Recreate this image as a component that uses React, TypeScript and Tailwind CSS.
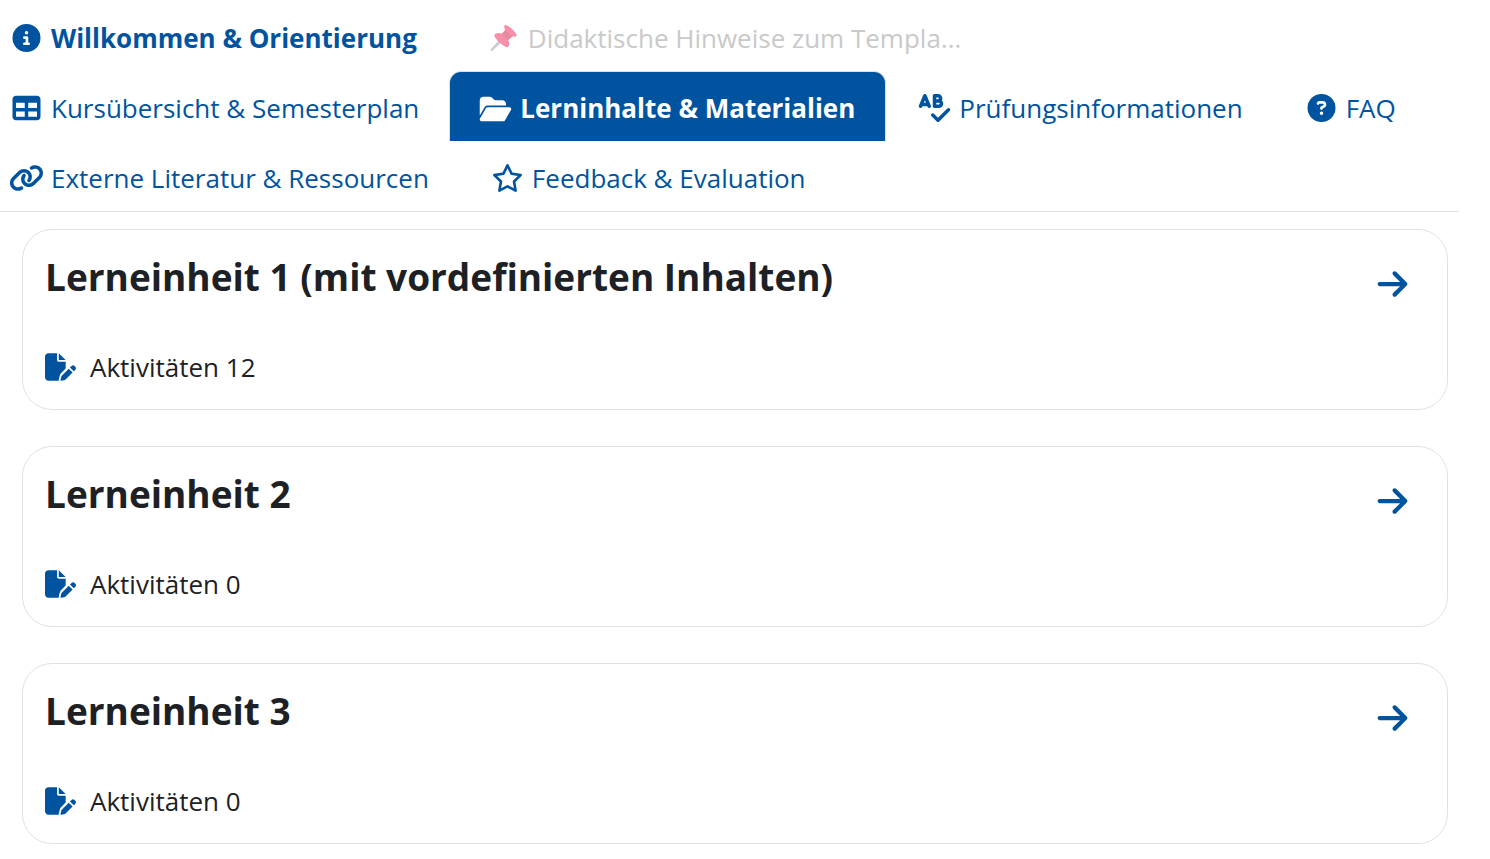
import {
  FaCircleInfo,
  FaTable,
  FaFolderOpen,
  FaCircleQuestion,
  FaLink,
  FaRegStar,
  FaSpellCheck,
  FaArrowRight,
  FaFilePen,
} from "react-icons/fa6";
import type { IconType } from "react-icons";
import clsx from "clsx";

const PushPin = ({ className }: { className?: string }) => (
  <svg viewBox="0 0 32 32" className={className} aria-hidden="true">
    <path d="M1 29.500 L11 18.500 L13.500 21 L2.500 31 Z" fill="#c9c9d0" />
    <path
      d="M17.500 1.500 C20 -0.500 32 10.500 31 13.500 C29.500 15.500 27.500 14.500 26.500 14 L21.500 18.500 C23.500 22 22.500 26 20 26.500 C17 27 5.500 16.500 5.500 13.500 C5.500 10.500 10 9.500 14 11 L18 6.500 C16.500 4.500 16.500 2.500 17.500 1.500 Z"
      fill="#f78fa8"
    />
    <path d="M18.500 7 L25.500 14 L21 18 L14.500 11.500 Z" fill="#e38ba0" />
  </svg>
);

interface Tab {
  label: string;
  icon: IconType | typeof PushPin;
  active?: boolean;
  bold?: boolean;
  dimmed?: boolean;
}

const rows: Tab[][] = [
  [
    { label: "Willkommen & Orientierung", icon: FaCircleInfo, bold: true },
    { label: "Didaktische Hinweise zum Templa...", icon: PushPin, dimmed: true },
  ],
  [
    { label: "Kursübersicht & Semesterplan", icon: FaTable },
    { label: "Lerninhalte & Materialien", icon: FaFolderOpen, active: true },
    { label: "Prüfungsinformationen", icon: FaSpellCheck },
    { label: "FAQ", icon: FaCircleQuestion },
  ],
  [
    { label: "Externe Literatur & Ressourcen", icon: FaLink },
    { label: "Feedback & Evaluation", icon: FaRegStar },
  ],
];

const units = [
  { title: "Lerneinheit 1 (mit vordefinierten Inhalten)", count: 12 },
  { title: "Lerneinheit 2", count: 0 },
  { title: "Lerneinheit 3", count: 0 },
];

const TabLink = ({ label, icon: Icon, active, bold, dimmed }: Tab) => (
  <a
    href="#"
    aria-current={active ? "page" : undefined}
    className={clsx(
      "flex h-full items-center gap-[7px] pt-1 text-[26px] whitespace-nowrap first:pl-[9px]",
      active
        ? "rounded-t-xl border border-b-0 border-[#dee2e6] bg-[#00549f] pl-7 font-bold text-white"
        : "pl-[31px]",
      bold ? "pr-[38px] font-bold" : "pr-[30px]",
      !active && (dimmed ? "text-[#c9c9c9]" : "text-[#00549f]")
    )}
  >
    <Icon className="h-7 w-[35px] shrink-0" />
    {label}
  </a>
);

const UnitCard = ({ title, count }: { title: string; count: number }) => (
  <section className="flex items-start justify-between rounded-[30px] border border-[#dee2e6] pt-[23px] pr-[39px] pb-[22px] pl-[22px]">
    <div>
      <h2 className="text-[37px] leading-[48px] font-bold">{title}</h2>
      <p className="mt-[46px] flex h-10 items-center gap-[14px] text-[26px]">
        <FaFilePen className="h-7 w-[31px] text-[#00549f]" />
        Aktivitäten {count}
      </p>
    </div>
    <a href="#" aria-label={title} className="mt-[14px] text-[#00549f]">
      <FaArrowRight className="h-[34px] w-[31px]" />
    </a>
  </section>
);

const App: React.FC = () => {
  return (
    <main className="min-h-screen bg-white pb-4 font-['Open_Sans',sans-serif] text-[#1d2125]">
      <nav className="mr-[31px] border-b border-[#dee2e6] pt-px">
        {rows.map((row, i) => (
          <div key={i} className="flex h-[70px]">
            {row.map((tab) => (
              <TabLink key={tab.label} {...tab} />
            ))}
          </div>
        ))}
      </nav>
      <div className="mt-[17px] mr-[42px] ml-[22px] flex flex-col gap-9">
        {units.map((unit) => (
          <UnitCard key={unit.title} {...unit} />
        ))}
      </div>
    </main>
  );
};

export default App;
